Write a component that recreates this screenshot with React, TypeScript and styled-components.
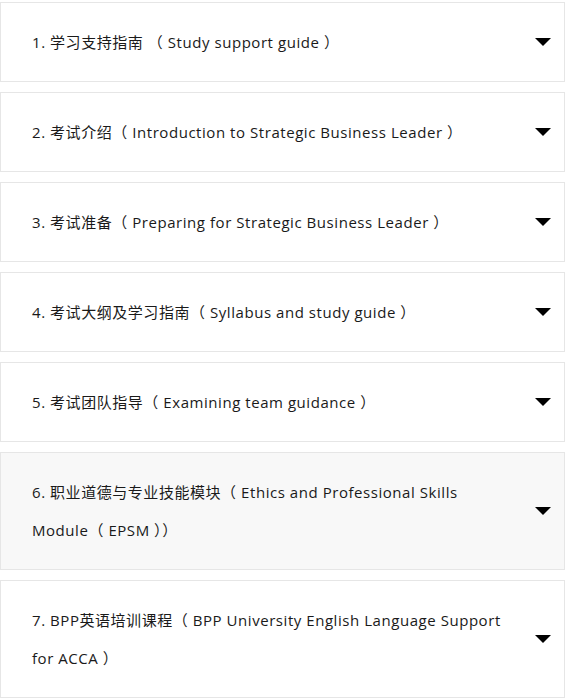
import styled, { createGlobalStyle } from "styled-components";

const GlobalStyle = createGlobalStyle`
  body {
    margin: 0;
    background: #ffffff;
    font-family: "Open Sans", "Noto Sans CJK SC", sans-serif;
  }
`;

const List = styled.div`
  display: flex;
  flex-direction: column;
  gap: 10px;
  width: 565px;
  padding-top: 2px;
`;

const Item = styled.div<{ $active?: boolean }>`
  display: flex;
  align-items: center;
  border: 1px solid #e6e6e6;
  background: ${(p) => (p.$active ? "#f8f8f8" : "#ffffff")};
  padding: 20px 13px 20px 31px;
  cursor: pointer;
`;

const Label = styled.div`
  flex: 1;
  max-width: 478px;
  margin-right: auto;
  font-size: 15px;
  letter-spacing: 0.55px;
  line-height: 38px;
  color: #1a1a1a;
`;

const Arrow = styled.span`
  flex-shrink: 0;
  width: 0;
  height: 0;
  border-left: 8px solid transparent;
  border-right: 8px solid transparent;
  border-top: 8px solid #000;
`;

const items = [
  "1. 学习支持指南 （ Study support guide ）",
  "2. 考试介绍（ Introduction to Strategic Business Leader ）",
  "3. 考试准备（ Preparing for Strategic Business Leader ）",
  "4. 考试大纲及学习指南（ Syllabus and study guide ）",
  "5. 考试团队指导（ Examining team guidance ）",
  "6. 职业道德与专业技能模块（ Ethics and Professional Skills Module（ EPSM ））",
  "7. BPP英语培训课程（ BPP University English Language Support for ACCA ）",
];

const App = () => {
  return (
    <>
      <GlobalStyle />
      <List>
        {items.map((text, i) => (
          <Item key={i} $active={i === 5}>
            <Label>{text}</Label>
            <Arrow />
          </Item>
        ))}
      </List>
    </>
  );
};

export default App;
